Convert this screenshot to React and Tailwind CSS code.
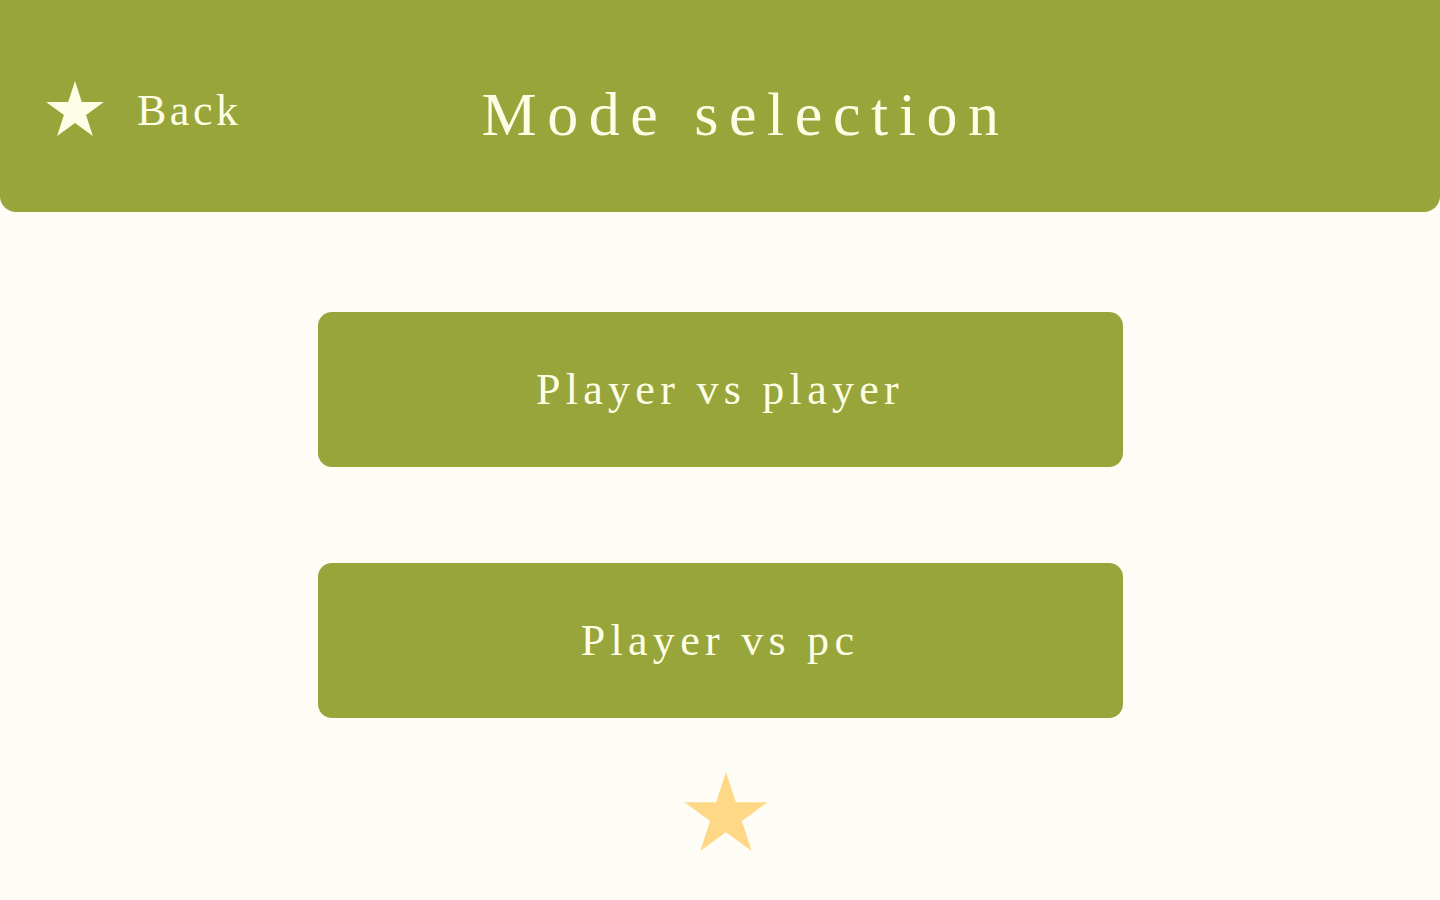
import React from "react";

function Star({ className, color }) {
  return (
    <svg viewBox="0 0 100 95" className={className} aria-hidden="true">
      <polygon
        fill={color}
        points="50,0 61.8,36.3 100,36.3 69.1,58.8 80.9,95 50,72.6 19.1,95 30.9,58.8 0,36.3 38.2,36.3"
      />
    </svg>
  );
}

export default function App() {
  const font = { fontFamily: '"Liberation Serif", "Times New Roman", serif' };
  return (
    <div className="min-h-[900px] w-full bg-[#fdfdf6]" style={font}>
      <header className="flex h-[212px] items-center rounded-b-[16px] bg-[#97a53b] px-[46px] text-[#fefee6]">
        <button className="flex items-center gap-[33px] pt-[4px]">
          <Star className="h-[55px] w-[58px]" color="#fefee6" />
          <span className="mt-[6px] text-[44px] font-normal leading-none tracking-[0.08em]">Back</span>
        </button>
        <h1 className="ml-[240px] mt-[16px] text-[62px] font-normal leading-none tracking-[0.17em]">
          Mode selection
        </h1>
      </header>
      <main className="flex flex-col items-center pt-[100px]">
        <div className="flex w-[805px] flex-col gap-[96px]">
          <button className="flex h-[155px] items-center justify-center rounded-[14px] bg-[#97a53b] text-[44px] leading-none tracking-[0.12em] text-[#fefee6]">
            Player vs player
          </button>
          <button className="flex h-[155px] items-center justify-center rounded-[14px] bg-[#97a53b] text-[44px] leading-none tracking-[0.12em] text-[#fefee6]">
            Player vs pc
          </button>
        </div>
        <Star className="ml-[11px] mt-[54px] h-[79px] w-[84px]" color="#ffd887" />
      </main>
    </div>
  );
}
